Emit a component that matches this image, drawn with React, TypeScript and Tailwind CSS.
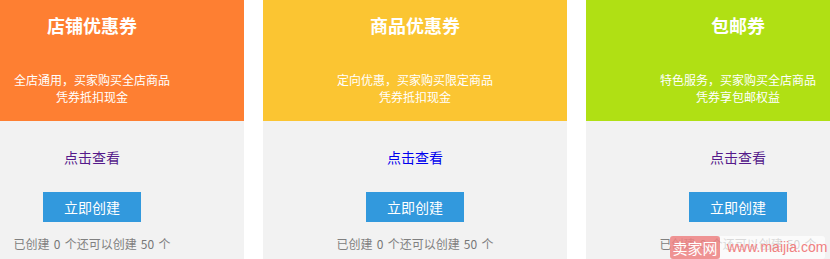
const CJK = "font-['Noto_Sans_CJK_SC',sans-serif]";

const COUPONS = [
  { title: "店铺优惠券", lines: ["全店通用，买家购买全店商品", "凭券抵扣现金"], bg: "bg-[#fe7f32]", link: "text-[#551a8b]" },
  { title: "商品优惠券", lines: ["定向优惠，买家购买限定商品", "凭券抵扣现金"], bg: "bg-[#fbc532]", link: "text-[#0000ee]" },
  { title: "包邮券", lines: ["特色服务，买家购买全店商品", "凭券享包邮权益"], bg: "bg-[#b0e014]", link: "text-[#551a8b]" },
];

function CouponCard({ title, lines, bg, link }: (typeof COUPONS)[number]) {
  return (
    <div className="w-[304px] shrink-0 flex flex-col">
      {/* coloured head */}
      <div className={`${bg} h-[121px] flex flex-col items-center pt-[13px] text-white`}>
        <p className="text-[18px] leading-6 font-bold">{title}</p>
        <div className="mt-[34px] text-[12px] leading-[17px] text-center">
          {lines.map((l, i) => <p key={i}>{l}</p>)}
        </div>
      </div>
      {/* gray body */}
      <div className="bg-[#f2f2f2] h-[138px] flex flex-col items-center pt-[26px]">
        <a href="#" className={`text-[14px] leading-5 ${link}`}>点击查看</a>
        <button className="mt-[25px] w-[98px] h-[30px] bg-[#3299dd] text-white text-[14px] leading-[30px]">
          立即创建
        </button>
        <p className="mt-[14px] text-[12px] leading-4 text-[#808080]">
          已创建 <span className="px-[1.5px] text-[#777]">0</span> 个还可以创建 <span className="px-[1.5px] text-[#777]">50</span> 个
        </p>
      </div>
    </div>
  );
}

export default function App() {
  return (
    <div className={`relative w-[830px] h-[259px] overflow-hidden bg-white ${CJK}`}>
      <div className="flex gap-[19px] ml-[-60px]">
        {COUPONS.map((c, i) => <CouponCard key={i} {...c} />)}
      </div>

      {/* site watermark */}
      <div className="absolute left-[670px] top-[236px] flex h-[23px] items-center">
        <div className="h-full w-[50px] rounded-[3px] bg-[#ee8282]/85 text-white text-[15px] leading-[23px] text-center">
          卖家网
        </div>
        <div className="h-full w-[105px] rounded-r-[3px] bg-white/70 text-[#f08080] text-[14px] leading-[23px] pl-[7px] font-['Liberation_Sans',sans-serif]">
          www.maijia.com
        </div>
      </div>
    </div>
  );
}
